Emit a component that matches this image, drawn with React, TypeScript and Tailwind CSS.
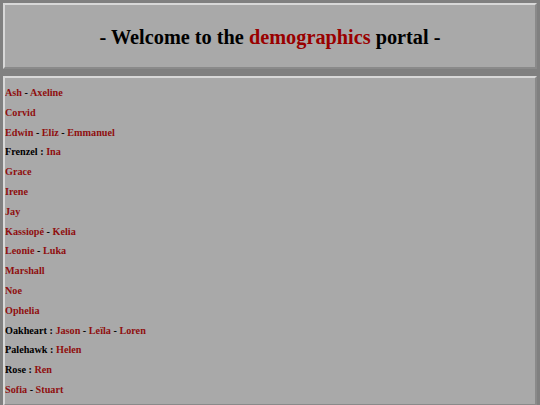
const rows: [string | null, string[]][] = [
  [null, ['Ash', 'Axeline']],
  [null, ['Corvid']],
  [null, ['Edwin', 'Eliz', 'Emmanuel']],
  ['Frenzel', ['Ina']],
  [null, ['Grace']],
  [null, ['Irene']],
  [null, ['Jay']],
  [null, ['Kassiopé', 'Kelia']],
  [null, ['Leonie', 'Luka']],
  [null, ['Marshall']],
  [null, ['Noe']],
  [null, ['Ophelia']],
  ['Oakheart', ['Jason', 'Leïla', 'Loren']],
  ['Palehawk', ['Helen']],
  ['Rose', ['Ren']],
  [null, ['Sofia', 'Stuart']],
]

export default function App() {
  return (
    <div className="min-h-[405px] bg-[#808080] p-[3px] font-['Liberation_Serif',serif] font-bold text-black">
      <div className="h-[66px] flex items-center justify-center pt-[3px] border-2 border-t-[#d8d8d8] border-l-[#d8d8d8] border-b-[#8a8a8a] border-r-[#8a8a8a] bg-[#a9a9a9]">
        <h1 className="text-[20.3px]">
          - Welcome to the <span className="text-[#990000]">demographics</span> portal -
        </h1>
      </div>
      <div className="mt-[7px] h-[330px] overflow-hidden border-2 border-t-[#d8d8d8] border-l-[#d8d8d8] border-b-[#8a8a8a] border-r-[#8a8a8a] bg-[#a9a9a9] pt-[8px]">
        {rows.map(([family, names], i) => (
          <p key={i} className="text-[10.2px] leading-[13px] mb-[6.8px]">
            {family && <span>{family} : </span>}
            {names.map((n, j) => (
              <span key={j}>
                {j > 0 && <span> - </span>}
                <span className="text-[#8f0f0f]">{n}</span>
              </span>
            ))}
          </p>
        ))}
      </div>
    </div>
  )
}
